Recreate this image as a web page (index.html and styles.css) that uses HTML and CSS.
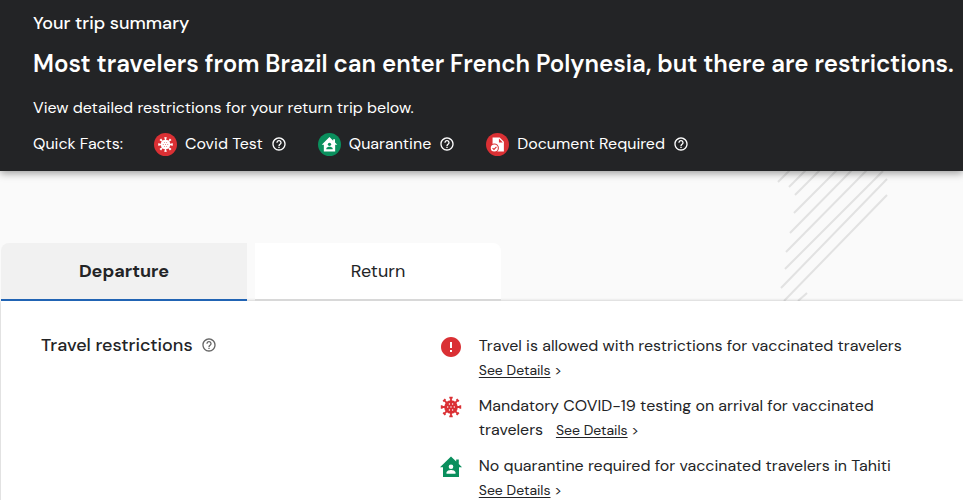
FILE: index.html
```
<!DOCTYPE html>
<html lang="en">
<head>
    <meta charset="UTF-8">
    <meta name="viewport" content="width=device-width, initial-scale=1.0">
    <title>Your trip summary</title>
    <link rel="stylesheet" href="styles.css">
</head>
<body>
    <!-- Shared icons -->
    <svg class="sprite" aria-hidden="true">
        <symbol id="help" viewBox="0 0 24 24">
            <path d="M11 18h2v-2h-2v2zm1-16C6.48 2 2 6.48 2 12s4.48 10 10 10 10-4.48 10-10S17.52 2 12 2zm0 18c-4.41 0-8-3.59-8-8s3.59-8 8-8 8 3.59 8 8-3.59 8-8 8zm0-14c-2.21 0-4 1.79-4 4h2c0-1.1.9-2 2-2s2 .9 2 2c0 2-3 1.75-3 5h2c0-2.25 3-2.5 3-5 0-2.21-1.79-4-4-4z"/>
        </symbol>
        <symbol id="virus" viewBox="0 0 24 24">
            <circle cx="12" cy="12" r="6.8"/>
            <g stroke="currentColor" stroke-width="1.8">
                <path d="M12 2.5v19M2.5 12h19M5.3 5.3l13.4 13.4M18.7 5.3L5.3 18.7"/>
                <path d="M10.300 2.700h3.400M10.300 21.300h3.400M2.700 10.300v3.400M21.300 10.300v3.400M4.200 6.400l2.200-2.200M17.600 4.200l2.200 2.200M4.200 17.600l2.200 2.200M17.600 19.800l2.200-2.200"/>
            </g>
            <g class="spots">
                <circle cx="10.4" cy="9" r=".7"/>
                <circle cx="13.6" cy="9" r=".7"/>
                <circle cx="8.7" cy="12" r=".7"/>
                <circle cx="12" cy="12" r=".7"/>
                <circle cx="15.3" cy="12" r=".7"/>
                <circle cx="10.4" cy="15" r=".7"/>
                <circle cx="13.6" cy="15" r=".7"/>
            </g>
        </symbol>
        <symbol id="house" viewBox="0 0 24 24">
            <path d="M12 1.500L1 12.200h3V22h16v-9.800h3l-3.200-3.100V4.500h-2.600v2.100z"/>
            <g class="spots">
                <circle cx="12" cy="11.700" r="2.300"/>
                <path d="M7.500 18.800v-1.300c0-1.700 3-2.500 4.500-2.500s4.500.8 4.500 2.500v1.300z"/>
            </g>
        </symbol>
        <symbol id="document" viewBox="0 0 24 24">
            <path d="M5 2h10l6 6v14H5z"/>
            <path class="spots" d="M14 3.500V9h5.500z"/>
            <circle class="spots" cx="7.500" cy="17" r="6.500"/>
            <circle cx="7.500" cy="17" r="5"/>
            <path class="tick" d="M5 17l2 2 3.500-3.800"/>
        </symbol>
        <symbol id="alert" viewBox="0 0 24 24">
            <path d="M12 2C6.48 2 2 6.48 2 12s4.48 10 10 10 10-4.48 10-10S17.52 2 12 2zm1 15h-2v-2h2v2zm0-4h-2V7h2v6z"/>
        </symbol>
    </svg>

    <header class="summary">
        <h2>Your trip summary</h2>
        <h1>Most travelers from Brazil can enter French Polynesia, but there are restrictions.</h1>
        <p>View detailed restrictions for your return trip below.</p>
        <div class="facts">
            <span class="facts-title">Quick Facts:</span>
            <div class="fact">
                <span class="badge red"><svg><use href="#virus"/></svg></span>
                <span>Covid Test</span>
                <button type="button" class="help" aria-label="About Covid tests"><svg><use href="#help"/></svg></button>
            </div>
            <div class="fact">
                <span class="badge green"><svg><use href="#house"/></svg></span>
                <span>Quarantine</span>
                <button type="button" class="help" aria-label="About quarantine"><svg><use href="#help"/></svg></button>
            </div>
            <div class="fact">
                <span class="badge red"><svg><use href="#document"/></svg></span>
                <span>Document Required</span>
                <button type="button" class="help" aria-label="About documents"><svg><use href="#help"/></svg></button>
            </div>
        </div>
    </header>

    <main class="content">
        <!-- Background stripes -->
        <svg class="stripes" viewBox="0 0 112 130" aria-hidden="true">
            <path d="M2 11L14-1M13 16L30-1M19 24L44-1M18 42L61-1M14 62L76-1M10 81L91-1M9 98L107 0M5 117L111 8M8 130L111 24M22 130L31 122"/>
        </svg>

        <div class="tabs" role="tablist">
            <button type="button" class="tab active" role="tab" aria-selected="true">Departure</button>
            <button type="button" class="tab" role="tab" aria-selected="false">Return</button>
        </div>

        <section class="panel">
            <div class="panel-title">
                <h3>Travel restrictions</h3>
                <button type="button" class="help" aria-label="About travel restrictions"><svg><use href="#help"/></svg></button>
            </div>
            <ul class="restrictions">
                <li>
                    <svg class="icon-red"><use href="#alert"/></svg>
                    <p>Travel is allowed with restrictions for vaccinated travelers <span class="details"><a href="#">See Details</a> &gt;</span></p>
                </li>
                <li>
                    <svg class="icon-red"><use href="#virus"/></svg>
                    <p>Mandatory COVID-19 testing on arrival for vaccinated travelers&nbsp;&nbsp; <span class="details"><a href="#">See Details</a> &gt;</span></p>
                </li>
                <li>
                    <svg class="icon-green"><use href="#house"/></svg>
                    <p>No quarantine required for vaccinated travelers in Tahiti <span class="details"><a href="#">See Details</a> &gt;</span></p>
                </li>
            </ul>
        </section>
    </main>
</body>
</html>
```

FILE: styles.css
```
:root {
    --dark: #232426;
    --red: #da3034;
    --green: #0a8f5d;
    --blue: #2164b4;
    --page-bg: #fafafa;
}

* {
    margin: 0;
    padding: 0;
    box-sizing: border-box;
}

body {
    background-color: var(--page-bg);
    color: var(--dark);
    font-family: "DM Sans", Inter, "Liberation Sans", sans-serif;
    font-size: 16px;
    line-height: 24px;
}

button {
    border: none;
    background: none;
    color: inherit;
    font-family: inherit;
    cursor: pointer;
}

svg {
    display: block;
    fill: currentColor;
}

.sprite {
    position: absolute;
    width: 0;
    height: 0;
}

.spots {
    fill: var(--spot);
}

.tick {
    fill: none;
    stroke: var(--spot);
    stroke-width: 1.5;
}

/* Summary */
.summary {
    position: relative;
    z-index: 1;
    padding: 11px 0 15px 33px;
    background-color: var(--dark);
    color: white;
    box-shadow: 0 2px 8px rgba(0, 0, 0, 0.4);
}

.summary h2 {
    font-size: 18px;
    font-weight: 500;
}

.summary h1 {
    margin: 13px 0 16px;
    font-size: 24px;
    font-weight: 600;
    line-height: 32px;
}

.facts {
    display: flex;
    flex-wrap: wrap;
    gap: 31px;
    margin-top: 12px;
}

.fact {
    display: flex;
    align-items: center;
    gap: 8px;
}

.badge {
    display: flex;
    align-items: center;
    justify-content: center;
    width: 23px;
    height: 23px;
    border-radius: 50%;
}

.badge svg {
    width: 17px;
    height: 17px;
}

.badge.red {
    --spot: var(--red);
    background-color: var(--red);
}

.badge.green {
    --spot: var(--green);
    background-color: var(--green);
}

.help svg {
    width: 16px;
    height: 16px;
}

/* Tabs */
.content {
    position: relative;
    padding: 72px 0 0 1px;
}

.stripes {
    position: absolute;
    top: 0;
    right: 75px;
    width: 112px;
    height: 130px;
    fill: none;
    stroke: #e2e2e2;
    stroke-width: 2;
}

.tabs {
    position: relative;
    z-index: 1;
    display: flex;
    gap: 8px;
}

.tab {
    width: 246px;
    height: 58px;
    border-bottom: 2px solid #d8d8d8;
    border-radius: 0 8px 0 0;
    background-color: white;
    font-size: 18px;
}

.tab.active {
    border-bottom-color: var(--blue);
    border-radius: 8px 0 0 0;
    background-color: #f1f1f1;
    font-weight: 700;
}

/* Restrictions */
.panel {
    position: relative;
    display: grid;
    grid-template-columns: 45% 1fr;
    padding: 32px 38px 32px 40px;
    background-color: white;
    box-shadow: 0 0 3px rgba(0, 0, 0, 0.25);
}

.panel-title {
    display: flex;
    align-items: center;
    align-self: start;
    gap: 8px;
}

.panel-title h3 {
    font-size: 18px;
    font-weight: 500;
}

.panel-title .help {
    color: #666;
}

.restrictions {
    display: grid;
    gap: 12px;
    padding-top: 1px;
    list-style: none;
}

.restrictions li {
    display: flex;
    gap: 16px;
}

.restrictions svg {
    flex: none;
    width: 24px;
    height: 24px;
    margin-top: 1px;
    --spot: white;
}

.icon-red {
    color: var(--red);
}

.icon-green {
    color: var(--green);
}

.details {
    font-size: 14px;
    white-space: nowrap;
}

.details a {
    color: inherit;
    text-underline-offset: 2px;
}
```
